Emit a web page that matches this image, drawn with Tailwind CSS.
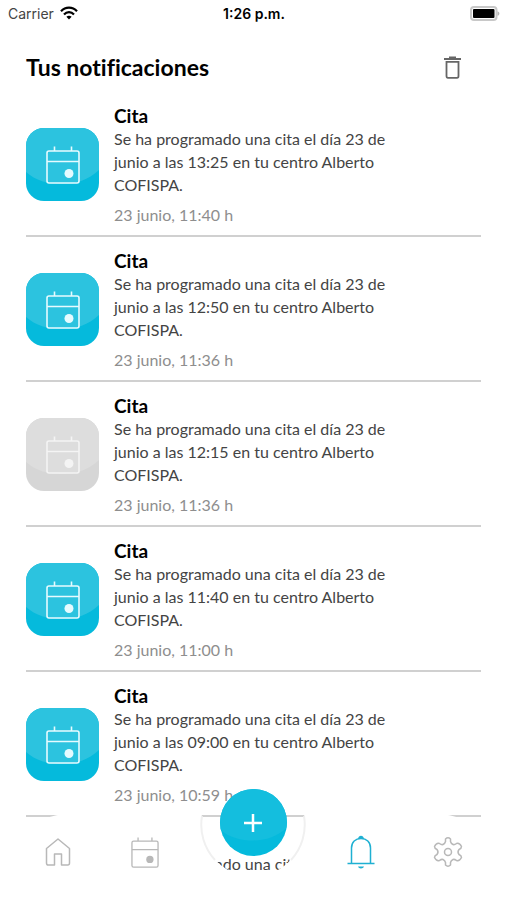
<!DOCTYPE html>
<html lang="es">

<head>
    <meta charset="UTF-8">
    <meta name="viewport" content="width=device-width, initial-scale=1.0">
    <title>Tus notificaciones</title>
    <script src="https://cdn.jsdelivr.net/npm/@tailwindcss/browser@4"></script>
</head>

<body class="relative h-screen overflow-hidden bg-white font-['Lato',sans-serif] text-black flex flex-col">
    <!-- Shared icons -->
    <svg class="hidden">
        <symbol id="calendar" viewBox="0 0 34 38">
            <g fill="none" stroke="currentColor" stroke-width="1.6">
                <rect x="1" y="5" width="32" height="32" rx="2" />
                <path d="M1 15.500H33M8.500 0.500V5M25.500 0.500V5" />
            </g>
            <circle cx="23" cy="27.500" r="4.500" fill="currentColor" />
        </symbol>
        <symbol id="shine" viewBox="0 0 73 73">
            <path d="M0 0H73V42C62 52 50 56 36.500 56S10 53 0 44Z" fill="currentColor" />
        </symbol>
    </svg>

    <!-- Status bar -->
    <div class="grid grid-cols-3 items-center h-[26px] pl-2 pr-1.5 shrink-0 font-['Inter',sans-serif] text-[14px]">
        <div class="flex items-center gap-1.5 text-[#444]">
            <span>Carrier</span>
            <svg class="w-[18px] h-[14px] text-black" viewBox="0 0 18 14" fill="none" stroke="currentColor" stroke-width="2.2">
                <path d="M1 5.200C5.500 0.400 12.500 0.400 17 5.200M4 8.400C6.800 5.400 11.200 5.400 14 8.400" />
                <path d="M9 13.500L6.400 10.800C7.800 9.300 10.200 9.300 11.600 10.800Z" fill="currentColor" stroke="none" />
            </svg>
        </div>
        <span class="text-center font-semibold">1:26 p.m.</span>
        <svg class="justify-self-end w-[30px] h-[15px]" viewBox="0 0 30 15">
            <rect x="1" y="1" width="25.500" height="13" rx="3" fill="#fff" stroke="#c8c8c8" stroke-width="2" />
            <rect x="3" y="3" width="21.500" height="9" rx="1" fill="#000" />
            <path d="M27.500 5.200C30 6 30 9 27.500 9.800Z" fill="#b5b5b5" />
        </svg>
    </div>

    <header class="flex items-center justify-between h-[66px] pl-[26px] pr-11 pt-4 shrink-0">
        <h1 class="text-[23px] leading-7 font-bold [font-variant-ligatures:none]">Tus notificaciones</h1>
        <button type="button" aria-label="Borrar notificaciones" class="text-[#666]">
            <svg class="w-[19px] h-[23px]" viewBox="0 0 19 23" fill="none" stroke="currentColor" stroke-width="1.8">
                <path d="M1 3H18M6 1.500H13" />
                <path d="M3.500 5.800H15.500V20C15.500 21.200 15 21.800 14 21.800H5C4 21.800 3.500 21.200 3.500 20Z" />
            </svg>
        </button>
    </header>

    <!-- Notifications -->
    <ul class="flex-1 min-h-0 overflow-hidden pl-[26px] pr-[25px]">
        <li class="flex gap-[15px] pt-[13px] pb-[9px] border-b-2 border-[#d0d0d0]">
            <div class="relative shrink-0 mt-[23px] size-[73px] rounded-[18px] overflow-hidden bg-[#05badc] flex items-center justify-center">
                <svg class="absolute inset-0 size-full text-[#2cc3df]"><use href="#shine" /></svg>
                <svg class="relative w-[34px] h-[38px] text-[#e6fbff]"><use href="#calendar" /></svg>
            </div>
            <div class="flex-1 pr-[80px] text-[16px] leading-[23px]">
                <h2 class="text-[19px] leading-[22px] font-bold">Cita</h2>
                <p class="text-[#444]">Se ha programado una cita el día 23 de junio a las 13:25 en tu centro Alberto COFISPA.</p>
                <p class="mt-[7px] text-[#8e8e8e]">23 junio, 11:40 h</p>
            </div>
        </li>
        <li class="flex gap-[15px] pt-[13px] pb-[9px] border-b-2 border-[#d0d0d0]">
            <div class="relative shrink-0 mt-[23px] size-[73px] rounded-[18px] overflow-hidden bg-[#05badc] flex items-center justify-center">
                <svg class="absolute inset-0 size-full text-[#2cc3df]"><use href="#shine" /></svg>
                <svg class="relative w-[34px] h-[38px] text-[#e6fbff]"><use href="#calendar" /></svg>
            </div>
            <div class="flex-1 pr-[80px] text-[16px] leading-[23px]">
                <h2 class="text-[19px] leading-[22px] font-bold">Cita</h2>
                <p class="text-[#444]">Se ha programado una cita el día 23 de junio a las 12:50 en tu centro Alberto COFISPA.</p>
                <p class="mt-[7px] text-[#8e8e8e]">23 junio, 11:36 h</p>
            </div>
        </li>
        <!-- already read -->
        <li class="flex gap-[15px] pt-[13px] pb-[9px] border-b-2 border-[#d0d0d0]">
            <div class="relative shrink-0 mt-[23px] size-[73px] rounded-[18px] overflow-hidden bg-[#d6d6d6] flex items-center justify-center">
                <svg class="absolute inset-0 size-full text-[#dddddd]"><use href="#shine" /></svg>
                <svg class="relative w-[34px] h-[38px] text-[#f4f4f4]"><use href="#calendar" /></svg>
            </div>
            <div class="flex-1 pr-[80px] text-[16px] leading-[23px]">
                <h2 class="text-[19px] leading-[22px] font-bold">Cita</h2>
                <p class="text-[#444]">Se ha programado una cita el día 23 de junio a las 12:15 en tu centro Alberto COFISPA.</p>
                <p class="mt-[7px] text-[#8e8e8e]">23 junio, 11:36 h</p>
            </div>
        </li>
        <li class="flex gap-[15px] pt-[13px] pb-[9px] border-b-2 border-[#d0d0d0]">
            <div class="relative shrink-0 mt-[23px] size-[73px] rounded-[18px] overflow-hidden bg-[#05badc] flex items-center justify-center">
                <svg class="absolute inset-0 size-full text-[#2cc3df]"><use href="#shine" /></svg>
                <svg class="relative w-[34px] h-[38px] text-[#e6fbff]"><use href="#calendar" /></svg>
            </div>
            <div class="flex-1 pr-[80px] text-[16px] leading-[23px]">
                <h2 class="text-[19px] leading-[22px] font-bold">Cita</h2>
                <p class="text-[#444]">Se ha programado una cita el día 23 de junio a las 11:40 en tu centro Alberto COFISPA.</p>
                <p class="mt-[7px] text-[#8e8e8e]">23 junio, 11:00 h</p>
            </div>
        </li>
        <li class="flex gap-[15px] pt-[13px] pb-[9px] border-b-2 border-[#d0d0d0]">
            <div class="relative shrink-0 mt-[23px] size-[73px] rounded-[18px] overflow-hidden bg-[#05badc] flex items-center justify-center">
                <svg class="absolute inset-0 size-full text-[#2cc3df]"><use href="#shine" /></svg>
                <svg class="relative w-[34px] h-[38px] text-[#e6fbff]"><use href="#calendar" /></svg>
            </div>
            <div class="flex-1 pr-[80px] text-[16px] leading-[23px]">
                <h2 class="text-[19px] leading-[22px] font-bold">Cita</h2>
                <p class="text-[#444]">Se ha programado una cita el día 23 de junio a las 09:00 en tu centro Alberto COFISPA.</p>
                <p class="mt-[7px] text-[#8e8e8e]">23 junio, 10:59 h</p>
            </div>
        </li>
        <li class="flex gap-[15px] pt-[13px]">
            <div class="shrink-0 w-[73px]"></div>
            <div class="flex-1 pr-[80px] text-[16px] leading-[23px]">
                <h2 class="text-[19px] leading-[22px] font-bold">Cita</h2>
                <p class="text-[#444]">Se ha programado una cita el día 23 de</p>
            </div>
        </li>
    </ul>

    <!-- Bottom bar, notched around the add button -->
    <nav class="absolute inset-x-0 bottom-0 h-[86px]">
        <div class="absolute inset-0 flex">
            <div class="flex-1 bg-white rounded-tl-[70px]"></div>
            <svg class="w-[120px] h-[86px] shrink-0" viewBox="0 0 120 86">
                <path d="M0 0H9A52 52 0 1 0 111 0H120V86H0Z" fill="#fff" />
                <path d="M9 2A52 52 0 0 0 22 46M111 2A52 52 0 0 1 98 46" fill="none" stroke="#f0f0f0" stroke-width="2" />
            </svg>
            <div class="flex-1 bg-white rounded-tr-[70px]"></div>
        </div>
        <div class="relative grid grid-cols-[1fr_1fr_128px_1fr_1fr] justify-items-center items-center h-[76px] px-3.5 text-[#b8b8b8]">
            <a href="#" aria-label="Inicio">
                <svg class="w-[26px] h-7" viewBox="0 0 26 28" fill="none" stroke="currentColor" stroke-width="1.5" stroke-linejoin="round">
                    <path d="M13 1L24.500 10.500V25C24.500 26.200 24 27 22.800 27H16.500V16H9.500V27H3.200C2 27 1.500 26.200 1.500 25V10.500Z" />
                </svg>
            </a>
            <a href="#" aria-label="Citas">
                <svg class="w-7 h-[31px]"><use href="#calendar" /></svg>
            </a>
            <button type="button" aria-label="Nueva cita" class="relative self-start -mt-[25px] size-[67px] rounded-full overflow-hidden bg-[#05badc] flex items-center justify-center">
                <svg class="absolute inset-0 size-full text-[#14bede]"><use href="#shine" /></svg>
                <svg class="relative size-[18px]" viewBox="0 0 18 18" stroke="#fff" stroke-width="2.5">
                    <path d="M9 0V18M0 9H18" />
                </svg>
            </button>
            <a href="#" aria-label="Notificaciones" class="text-[#1fb0d2]">
                <svg class="w-7 h-[34px]" viewBox="0 0 28 34" fill="none" stroke="currentColor" stroke-width="1.500">
                    <path d="M4.500 28V13C4.500 7 8.500 3.500 14 3.500S23.500 7 23.500 13V28M0.500 28.500H27.500" />
                    <path d="M11 4C11.500 -0.300 16.500 -0.300 17 4ZM11 31.500H17C16.500 34 11.500 34 11 31.500Z" fill="currentColor" stroke="none" />
                </svg>
            </a>
            <a href="#" aria-label="Ajustes">
                <svg class="w-[30px] h-[30px]" viewBox="0 0 30 30" fill="none" stroke="currentColor" stroke-width="1.500" stroke-linejoin="round">
                    <path d="M12.500 2Q15 -0.500 17.500 2V4.500Q18 6.500 20 7.500Q21.500 8 23.500 6.500Q26.500 5.500 28.500 9.500Q28.500 11.500 26 12.500Q24 15 26 17.500Q28.500 18.500 28.500 20.500Q26.500 24.500 23.500 23.500Q21.500 22 20 22.500Q18 23.500 17.500 25.500V28Q15 30.500 12.500 28V25.500Q12 23.500 10 22.500Q8.500 22 6.500 23.500Q3.500 24.500 1.500 20.500Q1.500 18.500 4 17.500Q6 15 4 12.500Q1.500 11.500 1.500 9.500Q3.500 5.500 6.500 6.500Q8.500 8 10 7.500Q12 6.500 12.500 4.500Z" />
                    <circle cx="15" cy="15" r="3.500" />
                </svg>
            </a>
        </div>
    </nav>
</body>

</html>
